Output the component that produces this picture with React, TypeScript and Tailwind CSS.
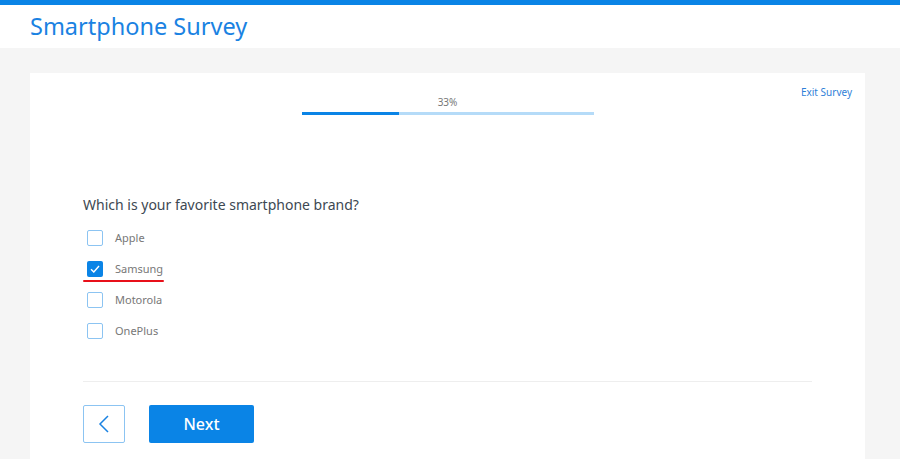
import { useState } from "react";

const brands = ["Apple", "Samsung", "Motorola", "OnePlus"];

export default function App() {
  const [picked, setPicked] = useState("Samsung");

  return (
    <div className="min-h-[459px] bg-[#f5f5f5] font-['Noto_Sans',sans-serif]">
      <div className="h-[5px] bg-[#0a84e6]" />
      <header className="h-[43px] bg-white px-[30px] pt-[6px]">
        <h1 className="text-[23.5px] leading-[30px] text-[#1a82e2]">Smartphone Survey</h1>
      </header>

      <main className="pt-[25px] pl-[30px] pr-[35px]">
        <section className="bg-white pb-[30px]">
          <div className="flex justify-end pr-[13px] pt-[12px]">
            <a href="#" className="text-[10px] leading-[14px] text-[#2f7fd8]">
              Exit Survey
            </a>
          </div>

          {/* barra de progreso */}
          <div className="mx-auto -mt-[4px] w-[292px]">
            <div className="text-center text-[10px] leading-[14px] text-[#777]">33%</div>
            <div className="mt-[3px] flex h-[3px] bg-[#b5dbf8]">
              <div className="w-[97px] bg-[#0a84e6]" />
            </div>
          </div>

          <div className="px-[53px] pt-[80px]">
            <h2 className="text-[14px] leading-[20px] text-[#3d4852]">
              Which is your favorite smartphone brand?
            </h2>

            <ul className="mt-[15px] flex flex-col gap-[15px]">
              {brands.map((b) => {
                const on = picked === b;
                return (
                  <li key={b} className="relative">
                    <label className="flex h-[16px] cursor-pointer items-center gap-[12px] pl-[4px]">
                      <input
                        type="checkbox"
                        className="hidden"
                        checked={on}
                        onChange={() => setPicked(b)}
                      />
                      <span
                        className={
                          on
                            ? "flex h-[16px] w-[16px] items-center justify-center rounded-[2px] bg-[#0a84e6]"
                            : "h-[16px] w-[16px] rounded-[2px] border border-[#8cc4f2] bg-white"
                        }
                      >
                        {on && (
                          <svg width="10" height="8" viewBox="0 0 10 8" fill="none">
                            <path d="M1 4.2 3.8 7 9 1" stroke="white" strokeWidth="1.4" />
                          </svg>
                        )}
                      </span>
                      <span className="text-[11px] leading-[16px] text-[#777]">{b}</span>
                    </label>
                    {on && (
                      <div className="absolute left-0 top-[19px] h-[2px] w-[81px] rounded-full bg-[#e8101a]" />
                    )}
                  </li>
                );
              })}
            </ul>

            <div className="mt-[42px] h-px bg-[#eeeeee]" />

            <div className="mt-[23px] flex gap-[24px]">
              <button
                type="button"
                className="flex h-[38px] w-[42px] items-center justify-center rounded-[2px] border border-[#8cc4f2] bg-white"
              >
                <svg width="12" height="18" viewBox="0 0 12 18" fill="none">
                  <path d="M10 1 2 9l8 8" stroke="#1a82e2" strokeWidth="1.5" />
                </svg>
              </button>
              <button
                type="button"
                className="h-[38px] w-[105px] rounded-[2px] bg-[#0a84e6] text-[16px] font-medium text-white"
              >
                Next
              </button>
            </div>
          </div>
        </section>
      </main>
    </div>
  );
}
